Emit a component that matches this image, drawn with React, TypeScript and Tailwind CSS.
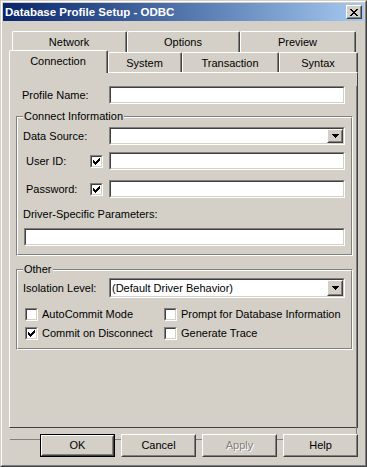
import type { ReactNode } from "react";

// classic 3d edge colours: face #d4d0c8, shadow #808080, dark #404040, highlight white

function Sunken({ className = "", children }: { className?: string; children?: ReactNode }) {
  return (
    <div className={`shrink-0 border border-t-[#808080] border-l-[#808080] border-b-white border-r-white ${className}`}>
      <div className="h-full border border-t-[#404040] border-l-[#404040] border-b-[#d4d0c8] border-r-[#d4d0c8] bg-white">
        {children}
      </div>
    </div>
  );
}

function Raised({ className = "", children }: { className?: string; children?: ReactNode }) {
  return (
    <div className={`shrink-0 border border-t-white border-l-white border-b-[#404040] border-r-[#404040] bg-[#d4d0c8] ${className}`}>
      <div className="flex h-full items-center justify-center border border-t-[#d4d0c8] border-l-[#d4d0c8] border-b-[#808080] border-r-[#808080]">
        {children}
      </div>
    </div>
  );
}

function Arrow() {
  return (
    <svg width="7" height="4" viewBox="0 0 7 4" shapeRendering="crispEdges">
      <rect x="0" y="0" width="7" height="1" fill="#000" />
      <rect x="1" y="1" width="5" height="1" fill="#000" />
      <rect x="2" y="2" width="3" height="1" fill="#000" />
      <rect x="3" y="3" width="1" height="1" fill="#000" />
    </svg>
  );
}

function Combo({ className = "", value = "" }: { className?: string; value?: string }) {
  return (
    <Sunken className={className}>
      <div className="flex h-full">
        <span className="flex-1 pl-[1px] leading-[14px] self-center">{value}</span>
        <Raised className="h-full w-[16px]">
          <Arrow />
        </Raised>
      </div>
    </Sunken>
  );
}

const tick = [
  [0, 2],
  [1, 3],
  [2, 4],
  [3, 3],
  [4, 2],
  [5, 1],
  [6, 0],
];

function Check({ checked = false }: { checked?: boolean }) {
  return (
    <Sunken className="h-[13px] w-[13px]">
      {checked && (
        <svg width="7" height="7" viewBox="0 0 7 7" className="ml-[1px] mt-[1px]" shapeRendering="crispEdges">
          {tick.map(([x, y]) => (
            <rect key={x} x={x} y={y} width="1" height="3" fill="#000" />
          ))}
        </svg>
      )}
    </Sunken>
  );
}

function Group({ label, className = "", children }: { label: string; className?: string; children?: ReactNode }) {
  return (
    <div className={`relative border border-t-[#808080] border-l-[#808080] border-r-white border-b-white ${className}`}>
      <div className="h-full border border-t-white border-l-white border-r-[#808080] border-b-[#808080]">
        {children}
      </div>
      <span className="absolute left-[6px] top-[-7px] bg-[#d4d0c8] px-[1px] leading-[13px]">{label}</span>
    </div>
  );
}

function Tab({ label, className = "", selected = false, back = false }: { label: string; className?: string; selected?: boolean; back?: boolean }) {
  return (
    <div
      className={`shrink-0 rounded-t-[2px] border-l border-t border-r border-l-white border-t-white border-r-[#404040] bg-[#d4d0c8] ${
        selected ? "relative z-10 -mb-[1px] h-[23px]" : back ? "h-[21px]" : "h-[20px]"
      } ${className}`}
    >
      <div className="flex h-full justify-center border-r border-r-[#808080] pt-[4px]">
        <span className="leading-[13px]">{label}</span>
      </div>
    </div>
  );
}

function Button({ label, primary = false, disabled = false }: { label: string; primary?: boolean; disabled?: boolean }) {
  const text = disabled ? "text-[#808080] [text-shadow:1px_1px_0_#fff]" : "";
  if (primary) {
    return (
      <div className="h-[23px] w-[75px] border border-black">
        <Raised className="h-full w-full">
          <span className={text}>{label}</span>
        </Raised>
      </div>
    );
  }
  return (
    <Raised className="h-[23px] w-[75px]">
      <span className={text}>{label}</span>
    </Raised>
  );
}

export default function App() {
  return (
    <div className="h-[467px] w-[367px] border border-t-[#d4d0c8] border-l-[#d4d0c8] border-b-[#404040] border-r-[#404040] bg-[#d4d0c8] font-['Liberation_Sans',Arial,sans-serif] text-[11px] text-black">
      <div className="h-full border border-t-white border-l-white border-b-[#808080] border-r-[#808080] p-[1px]">
        {/* caption */}
        <div className="flex h-[18px] items-center bg-linear-to-r from-[#0a246a] to-[#a6caf0] pl-[2px] pr-[2px]">
          <span className="flex-1 text-[11.5px] font-bold leading-[14px] text-white">Database Profile Setup - ODBC</span>
          <Raised className="h-[14px] w-[16px]">
            <svg width="8" height="7" viewBox="0 0 8 7" shapeRendering="crispEdges">
              <rect x="0" y="0" width="2" height="1" fill="#000" />
              <rect x="6" y="0" width="2" height="1" fill="#000" />
              <rect x="1" y="1" width="2" height="1" fill="#000" />
              <rect x="5" y="1" width="2" height="1" fill="#000" />
              <rect x="2" y="2" width="4" height="1" fill="#000" />
              <rect x="3" y="3" width="2" height="1" fill="#000" />
              <rect x="2" y="4" width="4" height="1" fill="#000" />
              <rect x="1" y="5" width="2" height="1" fill="#000" />
              <rect x="5" y="5" width="2" height="1" fill="#000" />
              <rect x="0" y="6" width="2" height="1" fill="#000" />
              <rect x="6" y="6" width="2" height="1" fill="#000" />
            </svg>
          </Raised>
        </div>

        <div className="px-[6px]">
          {/* tab rows */}
          <div className="mt-[10px] flex pl-[3px]">
            <Tab back label="Network" className="w-[115px]" />
            <Tab back label="Options" className="w-[113px]" />
            <Tab back label="Preview" className="w-[116px]" />
          </div>
          <div className="flex h-[20px] items-end">
            <Tab selected label="Connection" className="w-[99px]" />
            <Tab label="System" className="w-[74px]" />
            <Tab label="Transaction" className="w-[97px]" />
            <Tab label="Syntax" className="w-[79px]" />
          </div>

          {/* tab page */}
          <div className="h-[356px] border border-l-white border-t-white border-r-[#404040] border-b-[#404040]">
            <div className="h-full border-r border-b border-r-[#808080] border-b-[#808080]">
              <div className="mt-[13px] flex h-[18px] items-center pl-[12px]">
                <span className="w-[87px]">Profile Name:</span>
                <Sunken className="h-[18px] w-[236px]" />
              </div>

              <Group label="Connect Information" className="ml-[6px] mt-[12px] h-[140px] w-[337px]">
                <div className="mt-[9px] flex h-[18px] items-center pl-[5px]">
                  <span className="w-[86px]">Data Source:</span>
                  <Combo className="h-[18px] w-[236px]" />
                </div>
                <div className="mt-[7px] flex h-[18px] items-center pl-[8px]">
                  <span className="w-[64px]">User ID:</span>
                  <Check checked />
                  <Sunken className="ml-[6px] h-[18px] w-[236px]" />
                </div>
                <div className="mt-[10px] flex h-[18px] items-center pl-[8px]">
                  <span className="w-[64px]">Password:</span>
                  <Check checked />
                  <Sunken className="ml-[6px] h-[18px] w-[236px]" />
                </div>
                <div className="mt-[10px] pl-[5px] leading-[13px]">Driver-Specific Parameters:</div>
                <Sunken className="ml-[6px] mt-[7px] h-[18px] w-[321px]" />
              </Group>

              <Group label="Other" className="ml-[6px] mt-[13px] h-[81px] w-[337px]">
                <div className="mt-[7px] flex h-[20px] items-center pl-[5px]">
                  <span className="w-[86px]">Isolation Level:</span>
                  <Combo className="h-[20px] w-[236px]" value="(Default Driver Behavior)" />
                </div>
                <div className="mt-[10px] flex h-[13px] items-center pl-[7px]">
                  <div className="flex w-[139px] items-center gap-[4px]">
                    <Check />
                    <span>AutoCommit Mode</span>
                  </div>
                  <div className="flex items-center gap-[4px]">
                    <Check />
                    <span>Prompt for Database Information</span>
                  </div>
                </div>
                <div className="mt-[6px] flex h-[13px] items-center pl-[7px]">
                  <div className="flex w-[139px] items-center gap-[4px]">
                    <Check checked />
                    <span>Commit on Disconnect</span>
                  </div>
                  <div className="flex items-center gap-[4px]">
                    <Check />
                    <span>Generate Trace</span>
                  </div>
                </div>
              </Group>
            </div>
          </div>

          {/* dialog buttons */}
          <div className="mt-[6px] flex justify-end gap-[6px]">
            <Button primary label="OK" />
            <Button label="Cancel" />
            <Button disabled label="Apply" />
            <Button label="Help" />
          </div>
        </div>
      </div>
    </div>
  );
}
